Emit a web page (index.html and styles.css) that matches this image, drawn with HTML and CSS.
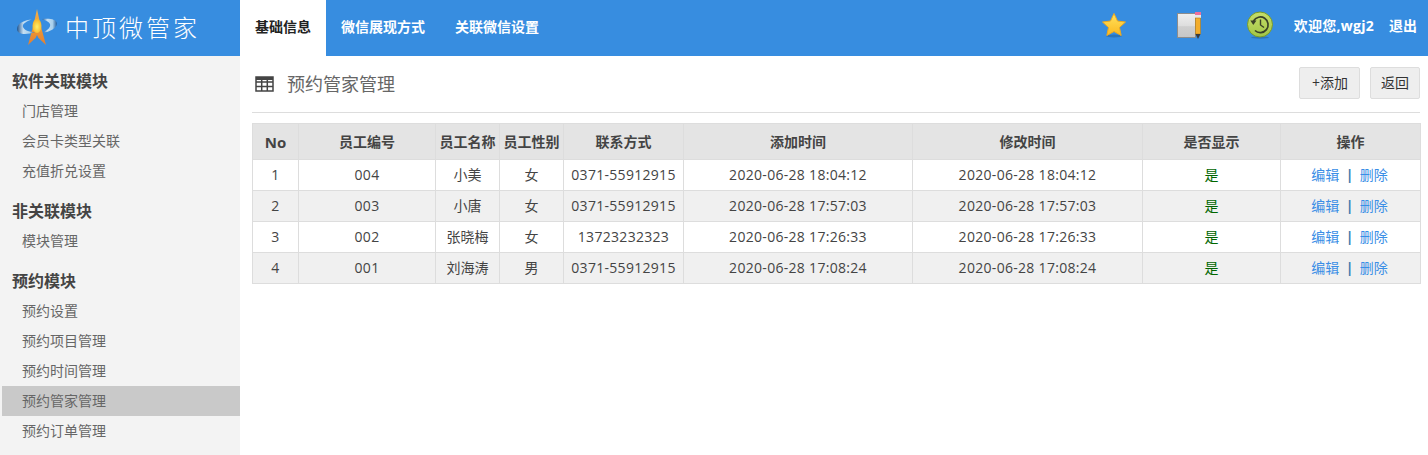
FILE: index.html
```html
<!DOCTYPE html>
<html lang="zh-CN">
<head>
<meta charset="utf-8">
<title>预约管家管理</title>
<link rel="stylesheet" href="styles.css">
</head>
<body>
<header class="topbar">
  <div class="brand">
    <svg class="brand-logo" width="44" height="42" viewBox="0 0 44 42">
      <defs>
        <linearGradient id="lg-star" x1="0" y1="0" x2="0" y2="1"><stop offset="0" stop-color="#f3b04a"/><stop offset=".5" stop-color="#f09a34"/><stop offset="1" stop-color="#e27f32"/></linearGradient>
        <radialGradient id="lg-core" cx=".5" cy=".55" r=".5"><stop offset="0" stop-color="#fff06a"/><stop offset="1" stop-color="#f8b82c"/></radialGradient>
        <linearGradient id="lg-ring" x1="0" y1="0" x2="1" y2="0"><stop offset="0" stop-color="#1f548f"/><stop offset=".35" stop-color="#c4def2"/><stop offset=".7" stop-color="#a9d0ec"/><stop offset="1" stop-color="#1f5a9a"/></linearGradient>
      </defs>
      <path d="M23 2 L26.500 18 L32 38 L24.500 31 L23 28 L21.500 31 L14 38 L19.500 18 Z" fill="url(#lg-star)"/>
      <ellipse cx="23" cy="19" rx="4.500" ry="7" fill="url(#lg-core)"/>
      <path d="M3 22 C3 16 11 13 18 12.500 C12 14.500 8 17 9 20 C10 23 15 25 21 25 C13 28 3 28 3 22 Z" fill="url(#lg-ring)"/>
      <path d="M28 12 C35 11 43 12 43 16.500 C43 21 35 25.500 29 25.500 C34 23 37 20 36 17 C35 15 32 13.500 28 12 Z" fill="url(#lg-ring)"/>
    </svg>
    <span class="brand-name">中顶微管家</span>
  </div>
  <nav class="tabs">
    <a class="tab tab-active">基础信息</a>
    <a class="tab">微信展现方式</a>
    <a class="tab">关联微信设置</a>
  </nav>
  <div class="tools">
    <svg class="tool tool-star" width="28" height="28" viewBox="0 0 28 28">
      <defs><linearGradient id="st" x1="0" y1="0" x2="0" y2="1"><stop offset="0" stop-color="#ffe35e"/><stop offset="1" stop-color="#fcb81e"/></linearGradient></defs>
      <ellipse cx="14" cy="25" rx="8" ry="1.500" fill="#2a6aa8" opacity=".7"/>
      <path d="M14 2.500 L17.500 10 L25.500 11 L19.500 16.500 L21.200 24.500 L14 20.500 L6.800 24.500 L8.500 16.500 L2.500 11 L10.500 10 Z" fill="url(#st)" stroke="#eca91f" stroke-linejoin="round"/>
    </svg>
    <svg class="tool tool-note" width="26" height="28" viewBox="0 0 26 28">
      <defs><linearGradient id="nt" x1="0" y1="0" x2="0" y2="1"><stop offset="0" stop-color="#efefef"/><stop offset=".5" stop-color="#dedede"/><stop offset=".55" stop-color="#cfcfcf"/><stop offset="1" stop-color="#c6c6c6"/></linearGradient></defs>
      <rect x="1.500" y="2.500" width="18" height="24" fill="url(#nt)" stroke="#8c8c8c"/>
      <rect x="19" y="1" width="6" height="3" fill="#ee6f9c"/>
      <rect x="19" y="4" width="6" height="3" fill="#e6e6e6"/>
      <rect x="19.500" y="7" width="5" height="16" fill="#f3ad2c" stroke="#b67d1a" stroke-width=".6"/>
      <path d="M19.500 23 L24.500 23 L22 28 Z" fill="#3a3a3a"/>
    </svg>
    <svg class="tool tool-clock" width="28" height="28" viewBox="0 0 28 28">
      <defs><linearGradient id="ck" x1="0" y1="0" x2="0" y2="1"><stop offset="0" stop-color="#c5de6a"/><stop offset="1" stop-color="#a3c646"/></linearGradient></defs>
      <ellipse cx="14" cy="26.500" rx="9" ry="1.200" fill="#2a6aa8" opacity=".7"/>
      <circle cx="14" cy="13.500" r="12.500" fill="url(#ck)" stroke="#789a2a"/>
      <path d="M7.500 10 A7.800 7.800 0 1 1 9 19.500" fill="none" stroke="#3a4128" stroke-width="1.700"/>
      <path d="M4.300 9.500 L10.500 9.500 L7.300 14 Z" fill="#3a4128"/>
      <path d="M14.500 8.500 V14 L18 16.500" fill="none" stroke="#3a4128" stroke-width="1.400"/>
    </svg>
    <span class="welcome">欢迎您,wgj2</span>
    <a class="logout">退出</a>
  </div>
</header>
<div class="shell">
  <aside class="sidebar">
    <h3 class="side-title">软件关联模块</h3>
    <a class="side-item">门店管理</a>
    <a class="side-item">会员卡类型关联</a>
    <a class="side-item">充值折兑设置</a>
    <h3 class="side-title">非关联模块</h3>
    <a class="side-item">模块管理</a>
    <h3 class="side-title">预约模块</h3>
    <a class="side-item">预约设置</a>
    <a class="side-item">预约项目管理</a>
    <a class="side-item">预约时间管理</a>
    <a class="side-item side-item-active">预约管家管理</a>
    <a class="side-item">预约订单管理</a>
  </aside>
  <main class="content">
    <div class="page-head">
      <svg class="head-icon" width="19" height="16" viewBox="0 0 19 16">
        <path d="M1 1 H18 V15 H1 Z M1 6 H18 M1 10.500 H18 M6.700 4 V15 M12.300 4 V15" fill="none" stroke="#444" stroke-width="1.500"/>
        <rect x="1" y="1" width="17" height="3" fill="#444"/>
      </svg>
      <h2 class="page-title">预约管家管理</h2>
      <div class="actions">
        <button class="btn btn-add">+添加</button>
        <button class="btn btn-back">返回</button>
      </div>
    </div>
    <table class="grid">
      <colgroup>
        <col class="c-no"><col class="c-code"><col class="c-name"><col class="c-sex"><col class="c-tel"><col class="c-add"><col class="c-mod"><col class="c-show"><col class="c-op">
      </colgroup>
      <thead>
        <tr><th class="th-no">No</th><th>员工编号</th><th>员工名称</th><th>员工性别</th><th>联系方式</th><th>添加时间</th><th>修改时间</th><th>是否显示</th><th>操作</th></tr>
      </thead>
      <tbody>
        <tr><td class="num">1</td><td class="num">004</td><td>小美</td><td>女</td><td class="num">0371-55912915</td><td class="num">2020-06-28 18:04:12</td><td class="num">2020-06-28 18:04:12</td><td class="yes">是</td><td class="ops"><a class="lnk">编辑</a><span class="sep">|</span><a class="lnk">删除</a></td></tr>
        <tr><td class="num">2</td><td class="num">003</td><td>小唐</td><td>女</td><td class="num">0371-55912915</td><td class="num">2020-06-28 17:57:03</td><td class="num">2020-06-28 17:57:03</td><td class="yes">是</td><td class="ops"><a class="lnk">编辑</a><span class="sep">|</span><a class="lnk">删除</a></td></tr>
        <tr><td class="num">3</td><td class="num">002</td><td>张晓梅</td><td>女</td><td class="num">13723232323</td><td class="num">2020-06-28 17:26:33</td><td class="num">2020-06-28 17:26:33</td><td class="yes">是</td><td class="ops"><a class="lnk">编辑</a><span class="sep">|</span><a class="lnk">删除</a></td></tr>
        <tr><td class="num">4</td><td class="num">001</td><td>刘海涛</td><td>男</td><td class="num">0371-55912915</td><td class="num">2020-06-28 17:08:24</td><td class="num">2020-06-28 17:08:24</td><td class="yes">是</td><td class="ops"><a class="lnk">编辑</a><span class="sep">|</span><a class="lnk">删除</a></td></tr>
      </tbody>
    </table>
  </main>
</div>
</body>
</html>
```

FILE: styles.css
```css
* { box-sizing: border-box; }
html, body { margin: 0; height: 100%; overflow: hidden; }
body {
  display: flex;
  flex-direction: column;
  background: #fff;
  color: #444;
  font: 14px/20px "Open Sans", "Noto Sans CJK SC", sans-serif;
}
.topbar { display: flex; height: 56px; flex: none; background: #378de0; color: #fff; }
.brand { width: 240px; display: flex; align-items: center; padding-left: 14px; }
.brand-logo { margin-right: 7px; flex: none; margin-top: -1px; }
.brand-name { font-size: 24px; font-weight: 300; letter-spacing: 3px; line-height: 56px; white-space: nowrap; }
.tabs { display: flex; }
.tab { padding: 0 15px; line-height: 54px; font-weight: 700; color: #fff; }
.tab-active { background: #fff; color: #222; }
.tools { margin-left: auto; display: flex; align-items: center; }
.tool { flex: none; margin-bottom: 6px; }
.tool-note { margin-left: 48px; }
.tool-clock { margin-left: 44px; margin-right: 20px; }
.welcome { font-weight: 700; margin-right: 15px; white-space: nowrap; letter-spacing: .25px; margin-bottom: 4px; }
.logout { font-weight: 700; margin-right: 11px; white-space: nowrap; margin-bottom: 4px; }
.shell { flex: 1; display: flex; min-height: 0; }
.sidebar { width: 240px; flex: none; background: #f3f3f3; padding-left: 2px; }
.side-title { margin: 10px 0 0; padding-left: 10px; font-size: 16px; line-height: 30px; font-weight: 700; color: #444; }
.side-item { display: block; height: 30px; line-height: 30px; padding-left: 20px; color: #666; }
.side-item-active { background: #c9c9c9; }
.content { flex: 1; padding: 0 8px 0 12px; min-width: 0; }
.page-head { display: flex; align-items: center; height: 57px; border-bottom: 1px solid #ddd; }
.head-icon { margin-left: 3px; margin-right: 13px; flex: none; }
.page-title { margin: 0; font-size: 18px; font-weight: 400; color: #666; }
.actions { margin-left: auto; display: flex; gap: 10px; margin-top: -2px; }
.btn { height: 32px; padding: 0; background: #eee; border: 1px solid #ddd; border-radius: 2px; font: inherit; color: #333; }
.btn-add { width: 61px; padding-left: 1px; }
.btn-back { width: 50px; }
.grid { margin-top: 10px; width: 1168px; border-collapse: collapse; table-layout: fixed; }
.c-no { width: 46px; } .c-code { width: 137px; } .c-name { width: 64px; } .c-sex { width: 64px; }
.c-tel { width: 120px; } .c-add { width: 229px; } .c-mod { width: 230px; } .c-show { width: 138px; } .c-op { width: 140px; }
.grid th, .grid td { border: 1px solid #ddd; padding: 0; text-align: center; white-space: nowrap; }
.grid th { height: 36px; background: #e4e4e4; font-weight: 700; font-size: 14px; color: #444; }
.grid .th-no { font-size: 15px; }
.grid td { height: 31px; }
.grid .num { letter-spacing: .3px; }
.grid tbody tr:nth-child(even) td { background: #f0f0f0; }
.grid .yes { color: #060; }
.grid .ops { padding-right: 2px; }
.lnk { color: #3a8ee6; }
.sep { margin: 0 6.500px; color: #3a7cb0; font-weight: 700; }
```
